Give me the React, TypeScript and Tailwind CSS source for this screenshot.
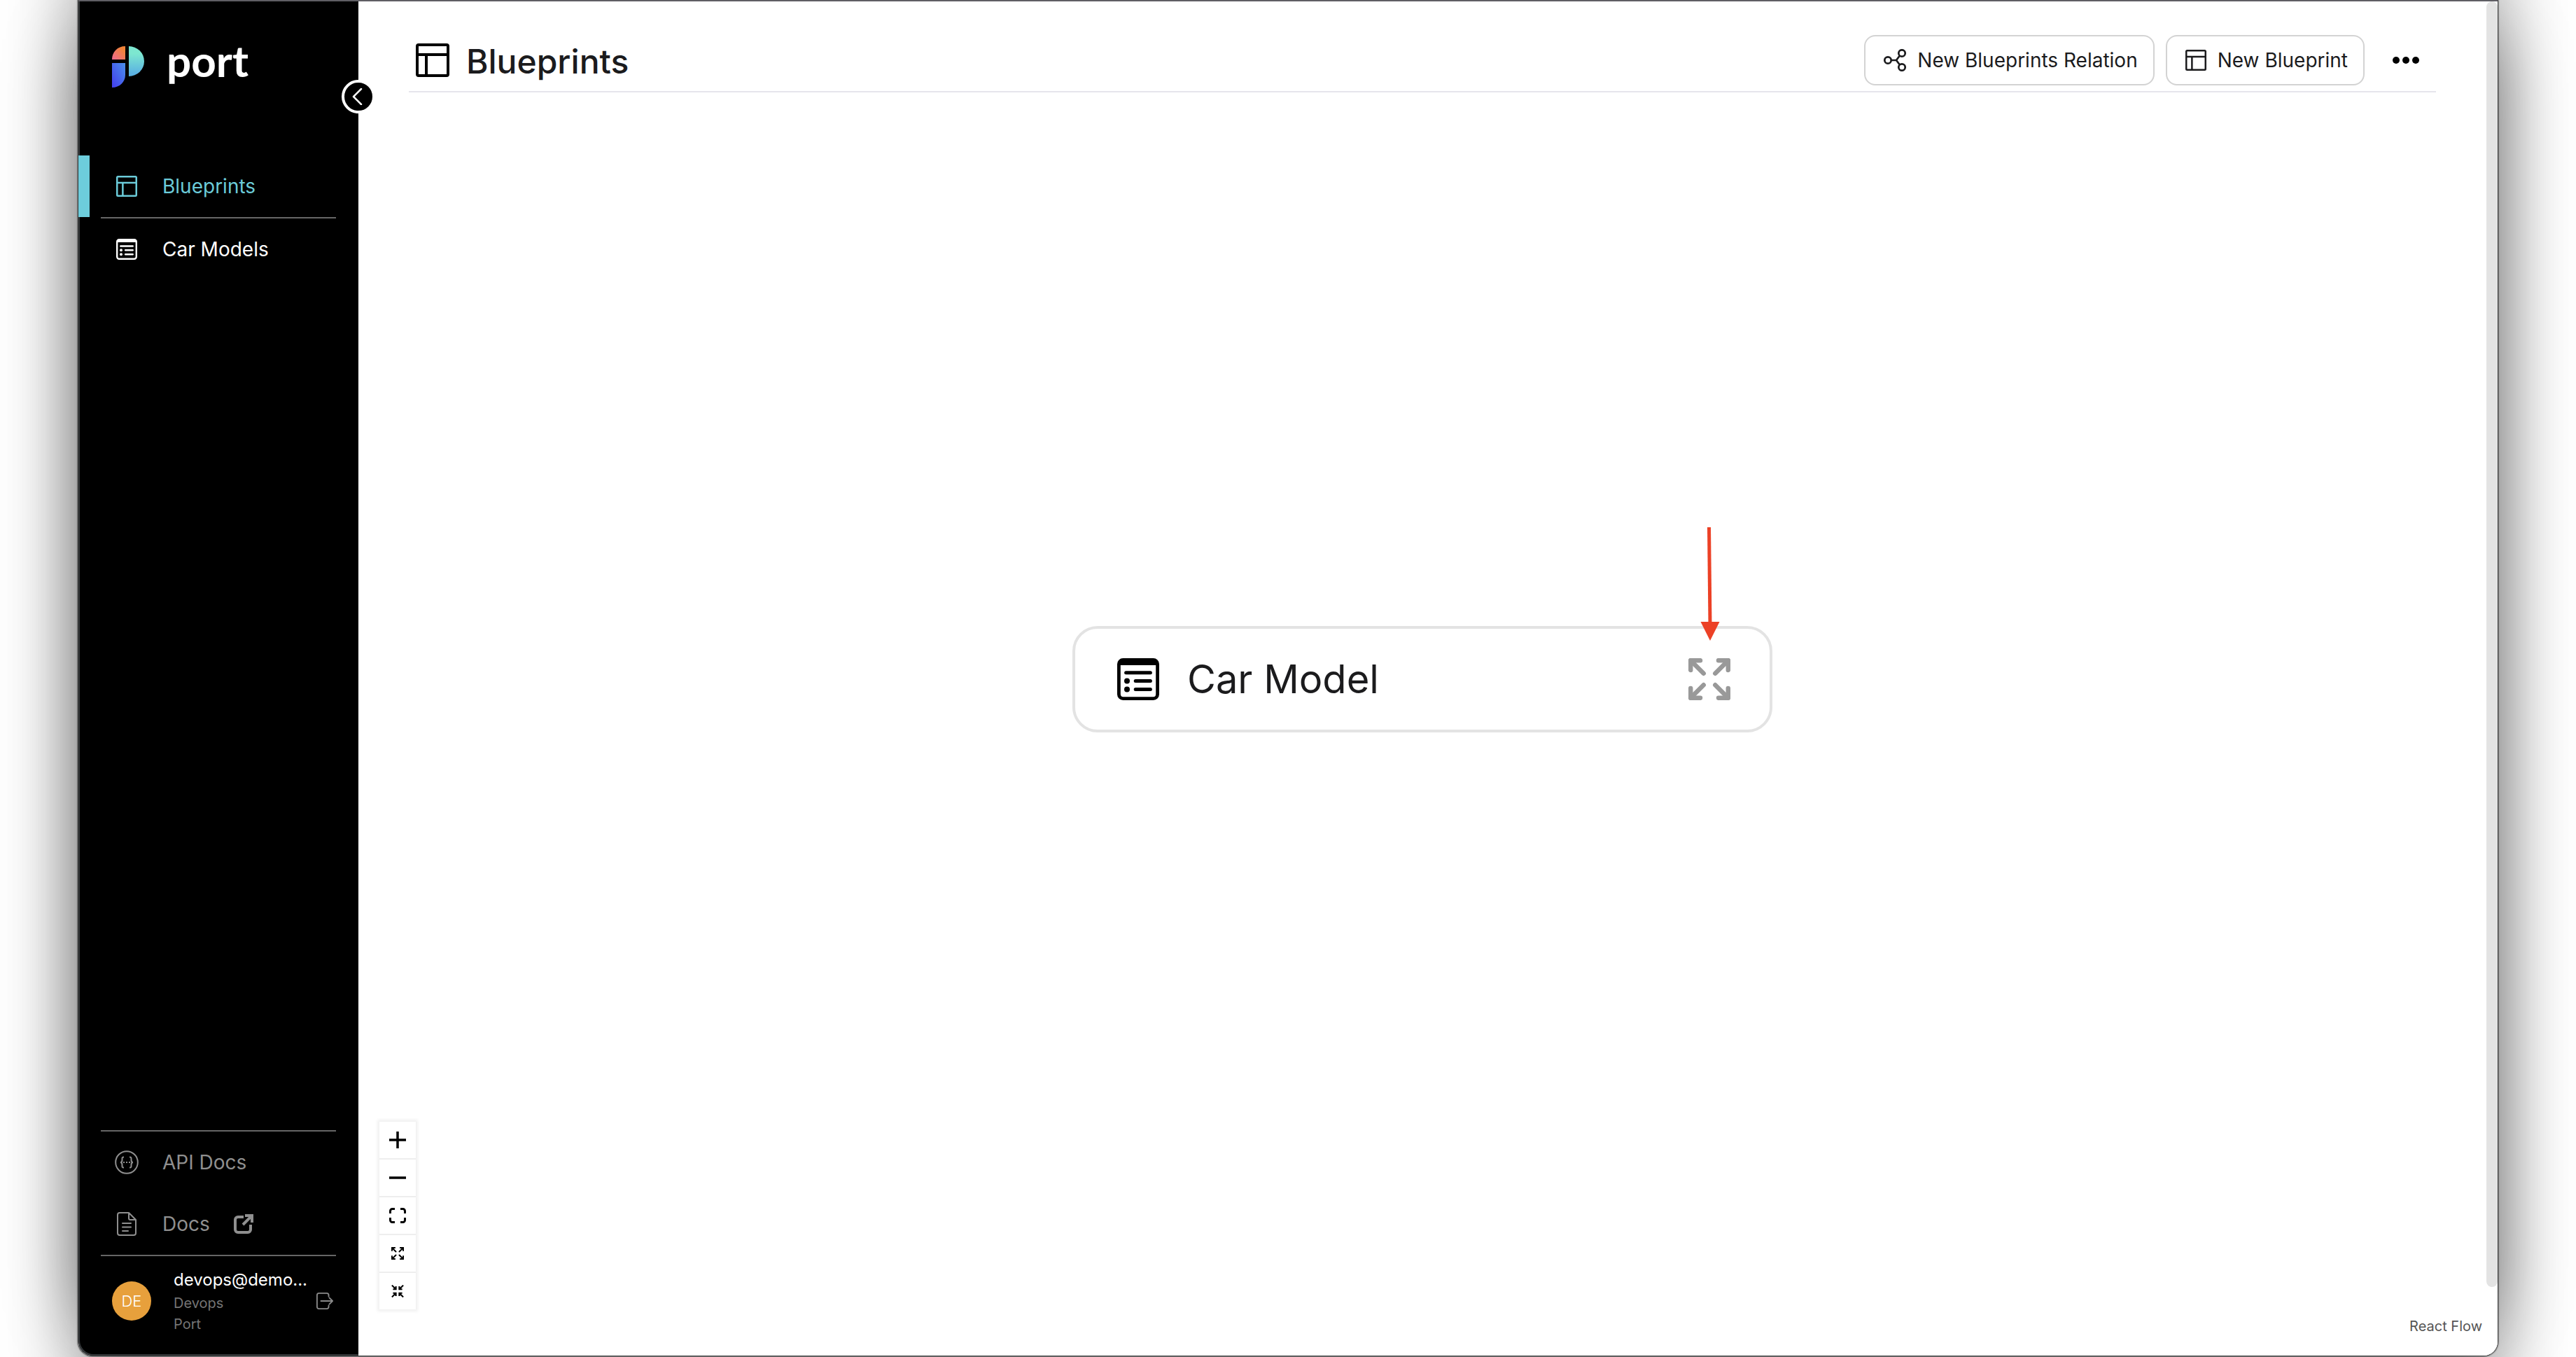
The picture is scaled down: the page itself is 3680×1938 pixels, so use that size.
import React from "react";

type IconProps = { className?: string };

function LayoutIcon({ className = "" }: IconProps) {
  return (
    <svg viewBox="0 0 24 24" className={className} fill="none" stroke="currentColor" strokeWidth="2" aria-hidden="true">
      <rect x="1" y="1" width="22" height="22" rx="1" />
      <path d="M1 8h22M7.500 8v15" />
    </svg>
  );
}

function ListIcon({ className = "" }: IconProps) {
  return (
    <svg viewBox="0 0 30 30" className={className} aria-hidden="true">
      <rect x="1.200" y="1.200" width="27.600" height="27.600" rx="3" fill="none" stroke="currentColor" strokeWidth="2.400" />
      <path d="M1 5V4a3 3 0 0 1 3-3h22a3 3 0 0 1 3 3v1z" fill="currentColor" />
      <g stroke="currentColor" strokeWidth="2.500" strokeLinecap="round">
        <path d="M6.300 10.400h17.400M13.100 16.300h10.600M13.100 22.200h10.600" />
      </g>
      <circle cx="7" cy="16.300" r="2" fill="currentColor" />
      <circle cx="7" cy="22.200" r="2" fill="currentColor" />
    </svg>
  );
}

function RelationIcon({ className = "" }: IconProps) {
  return (
    <svg viewBox="0 0 32 32" className={className} fill="none" stroke="currentColor" strokeWidth="2.700" aria-hidden="true">
      <circle cx="6" cy="16" r="4.700" />
      <circle cx="26" cy="6" r="4.700" />
      <circle cx="26" cy="26" r="4.700" />
      <path d="M10.700 16H18l4.500-6M18 16l4.500 6" />
    </svg>
  );
}

function ExpandIcon({ className = "" }: IconProps) {
  return (
    <svg viewBox="0 0 60 60" className={className} stroke="currentColor" strokeWidth="6.500" strokeLinecap="round" strokeLinejoin="round" aria-hidden="true">
      <path d="M17 3.200H3.200V17M43 3.200h13.800V17M17 56.800H3.200V43M43 56.800h13.800V43" fill="none" />
      <path d="M3.200 3.200l18.500 18.500M56.800 3.200L38.300 21.700M3.200 56.800l18.500-18.500M56.800 56.800L38.300 38.300" />
      <path d="M3 3h9l-9 9zM57 3h-9l9 9zM3 57h9l-9-9zM57 57h-9l9-9z" fill="currentColor" stroke="none" />
    </svg>
  );
}

function CollapseIcon({ className = "" }: IconProps) {
  return (
    <svg viewBox="0 0 60 60" className={className} fill="none" stroke="currentColor" strokeWidth="7" aria-hidden="true">
      <path d="M8 21h14V7M22 21L3 2M52 21H38V7M38 21L57 2M8 39h14v14M22 39L3 58M52 39H38v14M38 39l19 19" />
    </svg>
  );
}

function Logo() {
  return (
    <svg viewBox="0 0 46 60" className="h-15 w-[46px] shrink-0" aria-hidden="true">
      <defs>
        <linearGradient id="warm" x1="1" y1="0" x2="0" y2="1">
          <stop offset="0.2" stopColor="#f08338" />
          <stop offset="1" stopColor="#ee6a92" />
        </linearGradient>
        <linearGradient id="blue" x1="1" y1="0" x2="0" y2="1">
          <stop offset="0" stopColor="#4a90ea" />
          <stop offset="0.9" stopColor="#4444ee" />
        </linearGradient>
        <linearGradient id="teal" x1="0" y1="0" x2="0" y2="1">
          <stop offset="0.25" stopColor="#7de7d0" />
          <stop offset="0.9" stopColor="#5bb2e2" />
        </linearGradient>
      </defs>
      <path d="M19 0v19H0C0 8 8 0 19 0z" fill="url(#warm)" />
      <path d="M0 24h19v17c0 10-8 18-19 18z" fill="url(#blue)" />
      <path d="M24 0a22 21.500 0 0 1 0 43z" fill="url(#teal)" />
    </svg>
  );
}

const navRow = "flex h-22 w-full items-center pl-[54px] text-[28px]";

function Sidebar() {
  return (
    <aside className="relative flex w-[400px] shrink-0 flex-col rounded-bl-[20px] bg-black text-white shadow-[inset_2px_-2px_0_#333638]">
      <a href="#home" className="flex h-[220px] items-start gap-8 pt-16 pl-12" aria-label="port">
        <Logo />
        <span className="font-['Lato'] text-[62px] leading-[40px] font-bold">port</span>
      </a>
      <button aria-label="Collapse sidebar" className="absolute top-28 -right-6 z-10 flex size-12 items-center justify-center rounded-full border-4 border-white bg-black">
        <svg viewBox="0 0 24 24" className="size-6" fill="none" stroke="white" strokeWidth="2.500" strokeLinecap="round" strokeLinejoin="round" aria-hidden="true">
          <path d="M16 1L5 12l11 11" />
        </svg>
      </button>
      <nav className="flex grow flex-col">
        <a href="#blueprints" className={navRow + " relative text-[#6bcbd9]"}>
          <span className="absolute top-0 left-0 h-full w-4 bg-[#6dcddc]" />
          <LayoutIcon className="mr-9 size-[30px]" />
          Blueprints
        </a>
        <hr className="mx-8 border-t-2 border-[#666]" />
        <a href="#car-models" className={navRow}>
          <ListIcon className="mr-9 size-[30px]" />
          Car Models
        </a>
      </nav>
      <hr className="mx-8 border-t-2 border-[#666]" />
      <a href="#api-docs" className={navRow + " text-[#8f8f8f]"}>
        <svg viewBox="0 0 34 34" className="mr-8.5 -ml-0.5 size-[34px]" fill="none" stroke="currentColor" strokeWidth="2" aria-hidden="true">
          <circle cx="17" cy="17" r="15.800" />
          <path d="M13 9.500c-3 0-2.500 1.500-2.500 4 0 2-.5 3.500-2.500 3.500 2 0 2.500 1.500 2.500 3.500 0 2.500-.5 4 2.500 4M21 9.500c3 0 2.500 1.500 2.500 4 0 2 .5 3.500 2.500 3.500-2 0-2.500 1.500-2.500 3.500 0 2.500.5 4-2.500 4" />
          <path d="M12 17h2M16 17h2M20 17h2" />
        </svg>
        API Docs
      </a>
      <a href="#docs" className={navRow + " text-[#8f8f8f]"}>
        <svg viewBox="0 0 30 34" className="mr-9 h-[34px] w-[30px]" fill="none" stroke="currentColor" strokeWidth="2" strokeLinejoin="round" strokeLinecap="round" aria-hidden="true">
          <path d="M18 1H5a3 3 0 0 0-3 3v26a3 3 0 0 0 3 3h20a3 3 0 0 0 3-3V11zM18 1v8a2 2 0 0 0 2 2h8M9 16h12M9 21.500h12M9 27h8" />
        </svg>
        Docs
        <svg viewBox="0 0 28 28" className="ml-8.5 size-7" fill="none" stroke="currentColor" strokeWidth="4" aria-hidden="true">
          <path d="M14 4H6a4 4 0 0 0-4 4v14a4 4 0 0 0 4 4h14a4 4 0 0 0 4-4v-7M16 2h10v10M26 2L13 15" />
        </svg>
      </a>
      <hr className="mx-8 border-t-2 border-[#666]" />
      <div className="flex h-[142px] items-start pt-4 pl-12">
        <span className="mt-5 flex size-14 shrink-0 items-center justify-center rounded-full bg-[#e7a03c] text-[22px] font-light">DE</span>
        <div className="ml-8 flex w-48 flex-col">
          <span className="text-2xl leading-9 whitespace-nowrap">devops@demo...</span>
          <span className="text-xl leading-[30px] text-[#757575]">Devops</span>
          <span className="text-xl leading-[30px] text-[#757575]">Port</span>
        </div>
        <button aria-label="Log out" className="mt-9 ml-3 text-[#8a8a8a]">
          <svg viewBox="0 0 26 26" className="size-6" fill="none" stroke="currentColor" strokeWidth="2" strokeLinecap="round" strokeLinejoin="round" aria-hidden="true">
            <path d="M19 6V4a3 3 0 0 0-3-3H4a3 3 0 0 0-3 3v18a3 3 0 0 0 3 3h12a3 3 0 0 0 3-3v-2M7 13h18M20 8l5 5-5 5" />
          </svg>
        </button>
      </div>
    </aside>
  );
}

const headerButton = "flex h-18 items-center gap-4 rounded-2xl border-2 border-[#d3d3d3] pr-[22px] pl-[26px] text-[28px]";

function Header() {
  return (
    <header className="mr-22 ml-18 flex h-[130px] items-end justify-between border-b-2 border-[#e6e5ec] pb-2">
      <div className="flex h-18 items-center gap-6 pl-2.5">
        <LayoutIcon className="size-12 text-black" />
        <h1 className="pt-1 text-[48px] leading-[52px] font-medium">Blueprints</h1>
      </div>
      <div className="flex items-center gap-4">
        <button className={headerButton}>
          <RelationIcon className="size-8" />
          New Blueprints Relation
        </button>
        <button className={headerButton}>
          <LayoutIcon className="size-[30px]" />
          New Blueprint
        </button>
        <button aria-label="More actions" className="flex h-18 w-[86px] items-center justify-center gap-1">
          <span className="size-2.5 rounded-full bg-black" />
          <span className="size-2.5 rounded-full bg-black" />
          <span className="size-2.5 rounded-full bg-black" />
        </button>
      </div>
    </header>
  );
}

const controlButton = "flex size-13 items-center justify-center bg-white text-black";

function Controls() {
  return (
    <div className="absolute bottom-[66px] left-[30px] flex flex-col gap-0.5 bg-[#eee] shadow-[0_0_4px_3px_rgba(0,0,0,0.06)]">
      <button aria-label="Zoom in" className={controlButton}>
        <svg viewBox="0 0 24 24" className="size-6" stroke="currentColor" strokeWidth="3.500" aria-hidden="true"><path d="M12 0v24M0 12h24" /></svg>
      </button>
      <button aria-label="Zoom out" className={controlButton}>
        <svg viewBox="0 0 24 24" className="size-6" stroke="currentColor" strokeWidth="3.500" aria-hidden="true"><path d="M0 12h24" /></svg>
      </button>
      <button aria-label="Fit view" className={controlButton}>
        <svg viewBox="0 0 24 22" className="h-[22px] w-6" fill="none" stroke="currentColor" strokeWidth="3" aria-hidden="true">
          <path d="M1.500 8V4.500a3 3 0 0 1 3-3H8M16 1.500h3.500a3 3 0 0 1 3 3V8M22.500 14v3.500a3 3 0 0 1-3 3H16M8 20.500H4.500a3 3 0 0 1-3-3V14" />
        </svg>
      </button>
      <button aria-label="Expand all" className={controlButton}><ExpandIcon className="size-[18px]" /></button>
      <button aria-label="Collapse all" className={controlButton}><CollapseIcon className="size-[18px]" /></button>
    </div>
  );
}

function Canvas() {
  return (
    <section aria-label="Blueprint graph" className="relative grow">
      <article className="absolute top-[762px] left-[1020px] flex h-38 w-[1000px] items-center rounded-[36px] border-4 border-[#e3e3e3] bg-white pr-14 pl-15 text-[56px]">
        <ListIcon className="mr-10 size-[60px] text-black" />
        <span className="grow">Car Model</span>
        <button aria-label="Expand Car Model" className="text-[#999]"><ExpandIcon className="size-[60px]" /></button>
      </article>
      <svg viewBox="0 0 28 162" className="absolute top-[621px] left-[1917px] h-[162px] w-7" aria-hidden="true">
        <path d="M12.500 0L14 140" stroke="#ec4126" strokeWidth="5" />
        <path d="M0.500 135h27L14 162z" fill="#ec4126" />
      </svg>
      <Controls />
      <a href="#react-flow" className="absolute right-[22px] bottom-7 text-xl leading-7 text-[#555]">React Flow</a>
    </section>
  );
}

export default function App() {
  return (
    <div className="flex h-screen overflow-hidden bg-white px-28 pb-0.5 font-['Inter',sans-serif] text-[#1b1b1d]">
      <div className="relative flex grow rounded-b-[20px] shadow-[0_0_2px_1px_rgba(0,0,0,0.9),0_-60px_100px_4px_rgba(0,0,0,0.34),0_60px_100px_4px_rgba(0,0,0,0.38)]">
        <div className="flex grow overflow-hidden rounded-b-[20px] border-t-2 border-[#5f5e64] bg-white">
          <Sidebar />
          <main className="relative flex grow flex-col">
            <Header />
            <Canvas />
            <div className="absolute top-0 right-0 bottom-[98px] w-4 rounded-full bg-[#e3e3e3]" />
          </main>
        </div>
      </div>
    </div>
  );
}
